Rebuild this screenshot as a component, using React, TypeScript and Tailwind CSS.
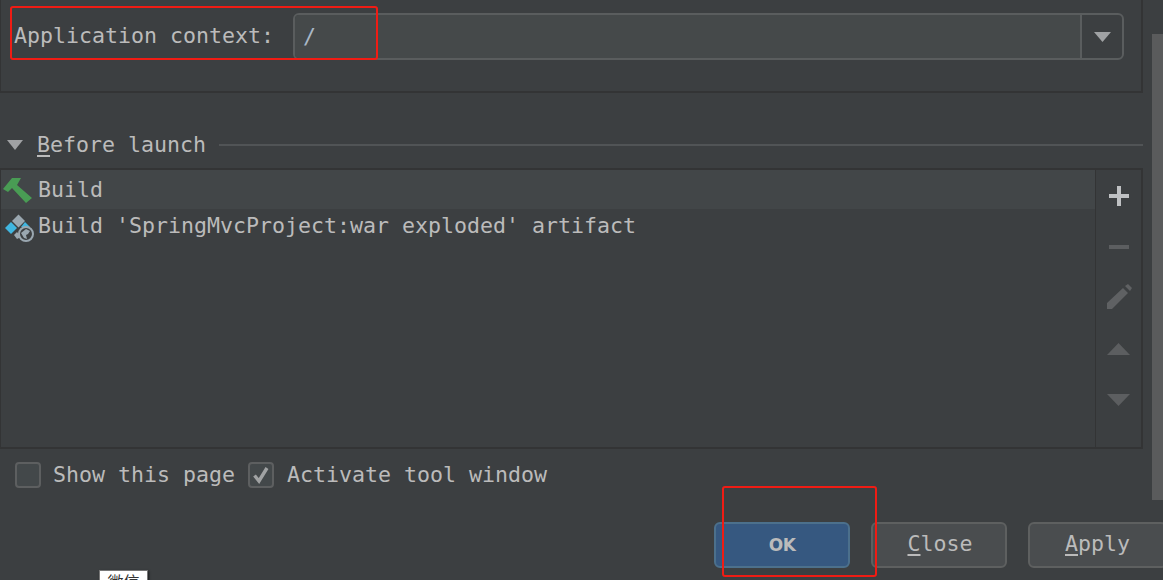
import React from "react";

const mono = "font-['DejaVu_Sans_Mono',monospace] text-[21.6px] leading-none";

function Tool({ children }: { children: React.ReactNode }) {
  return <div className="h-[51px] flex items-center justify-center">{children}</div>;
}

function Check({ checked }: { checked?: boolean }) {
  return (
    <div className="w-[26px] h-[26px] rounded-[4px] border-2 border-[#5d5f60] bg-[#43484a] flex items-center justify-center">
      {checked && (
        <svg width="20" height="20" viewBox="0 0 20 20">
          <path d="M3.5 10.5 L8 16 L16 3" fill="none" stroke="#a0a2a3" strokeWidth="3.4" />
        </svg>
      )}
    </div>
  );
}

function Btn({ children, cls }: { children: React.ReactNode; cls: string }) {
  return (
    <div className={`h-[46px] shrink-0 rounded-[6px] border-2 flex items-center justify-center ${cls}`}>
      {children}
    </div>
  );
}

export default function App() {
  return (
    <div className="relative w-[1163px] h-[580px] overflow-hidden bg-[#3c3f41] text-[#bbbbbb]">
      <div className="w-[1143px]">
        {/* top panel */}
        <div className="h-[93px] border-l border-r-2 border-b-2 border-[#333435] pt-[13px] pl-[13px] pr-[17px]">
          <div className="flex items-center h-[47px]">
            <span className={`${mono} w-[280px] shrink-0 pb-[2px] text-[#bbbbbb] whitespace-pre`}>Application context:</span>
            <div className="flex-1 -ml-[1px] h-[47px] flex rounded-[6px] border-2 border-[#5a5d5e] overflow-hidden">
              <div className={`${mono} flex-1 bg-[#45494a] flex items-center pl-[8px] text-[#a9b7c6]`}>/</div>
              <div className="w-[42px] border-l-2 border-[#5a5d5e] flex items-center justify-center">
                <svg width="17" height="10" viewBox="0 0 17 10"><path d="M0 0 H17 L8.5 10 Z" fill="#a0a2a4" /></svg>
              </div>
            </div>
          </div>
        </div>

        {/* before launch header */}
        <div className="h-[75px] pt-[29px] flex items-center">
          <svg className="ml-[7px] shrink-0" width="16" height="10" viewBox="0 0 16 10"><path d="M0 0 H16 L8 10 Z" fill="#a0a2a4" /></svg>
          <span className={`${mono} ml-[14px] whitespace-pre`}><span className="underline underline-offset-[3px]">B</span>efore launch</span>
          <div className="ml-[13px] flex-1 h-[2px] bg-[#515456]" />
        </div>

        {/* list */}
        <div className="h-[281px] border-l border-r-2 border-t-2 border-b-2 border-[#333435] flex">
          <div className="flex-1 min-w-0">
            <div className="h-[39px] bg-[#424648] flex items-center">
              <svg className="shrink-0" width="32" height="31" viewBox="1 174 32 31">
                <path d="M3 189 L12 178 L21 178 L17 185 L32 198 L26 203 L12 188 L8 192 Z" fill="#499c54" />
              </svg>
              <span className={`${mono} ml-[5px] whitespace-pre`}>Build</span>
            </div>
            <div className="h-[35px] flex items-center">
              <svg className="ml-[1px] shrink-0" width="32" height="33" viewBox="2 210 32 33">
                <path d="M18.5 214.5 L25 221 L18.5 227.5 L12 221 Z" fill="#9aa7b0" />
                <path d="M11 222 L17 228 L11 234 L5 228 Z" fill="#40b6e0" />
                <path d="M25 222 L30 227 L21 227 Z" fill="#40b6e0" />
                <path d="M17 232 L21 237 L17 239 L14 235 Z" fill="#9aa7b0" />
                <circle cx="26" cy="234" r="7" fill="#3c3f41" stroke="#9aa7b0" strokeWidth="2" />
                <path d="M21 233 L26 229 L30 231 L28 234 L26 235 L27 239 L24 238 Z" fill="#9aa7b0" />
              </svg>
              <span className={`${mono} ml-[4px] pb-[1px] whitespace-pre`}>Build 'SpringMvcProject:war exploded' artifact</span>
            </div>
          </div>
          <div className="w-[46px] shrink-0 border-l border-[#333435]">
            <Tool>
              <svg width="20" height="20" viewBox="0 0 20 20"><path d="M8 0 H12 V8 H20 V12 H12 V20 H8 V12 H0 V8 H8 Z" fill="#bfc1c3" /></svg>
            </Tool>
            <Tool>
              <svg width="20" height="4" viewBox="0 0 20 4"><rect width="20" height="4" fill="#5c5e60" /></svg>
            </Tool>
            <Tool>
              <svg className="-mt-[1px]" width="26" height="26" viewBox="0 0 26 26">
                <path d="M1 19 L17 4 L22 9 L6 25 L1 25 Z M19 2 L22 0 L26 4 L24 7 Z" fill="#5f6163" />
              </svg>
            </Tool>
            <Tool>
              <svg width="23" height="12" viewBox="0 0 23 12"><path d="M0 12 L11.5 0 L23 12 Z" fill="#5c5e60" /></svg>
            </Tool>
            <Tool>
              <svg width="23" height="12" viewBox="0 0 23 12"><path d="M0 0 H23 L11.5 12 Z" fill="#5c5e60" /></svg>
            </Tool>
          </div>
        </div>

        {/* options */}
        <div className="flex items-center h-[26px] mt-[13px] pl-[15px]">
          <Check />
          <span className={`${mono} ml-[12px] pb-[1px] whitespace-pre`}>Show this page</span>
          <div className="ml-[13px]"><Check checked /></div>
          <span className={`${mono} ml-[13px] pb-[1px] whitespace-pre`}>Activate tool window</span>
        </div>
      </div>

      {/* buttons */}
      <div className="flex gap-[21px] pl-[714px] mt-[34px]">
        <Btn cls="w-[136px] bg-[#365880] border-[#4c708c]">
          <span className="font-['DejaVu_Sans',sans-serif] text-[17px] leading-none font-bold text-[#bbbbbb] -tracking-[0.5px]">OK</span>
        </Btn>
        <Btn cls="w-[136px] pl-[2px] pb-[3px] bg-[#4a4d4f] border-[#5e6060]">
          <span className={`${mono} whitespace-pre`}><span className="underline underline-offset-[3px]">C</span>lose</span>
        </Btn>
        <Btn cls="w-[139px] pb-[3px] bg-[#4a4d4f] border-[#5e6060]">
          <span className={`${mono} whitespace-pre`}><span className="underline underline-offset-[3px]">A</span>pply</span>
        </Btn>
      </div>

      {/* scrollbar */}
      <div className="absolute left-[1152px] top-[34px] w-[11px] h-[466px] bg-[#5a5b5c]" />

      {/* tooltip cut off by the bottom edge */}
      <div className="absolute left-[99px] top-[570px] w-[49px] h-[30px] bg-white border border-[#777] shadow-[1px_1px_2px_rgba(0,0,0,0.5)] text-center font-['Noto_Sans_CJK_SC',sans-serif] text-[16px] leading-[20px] text-[#333]">
        微信
      </div>

      {/* red annotations */}
      <div className="absolute left-[10px] top-[6px] w-[368px] h-[54px] border-2 border-[#f01c14] rounded-[3px]" />
      <div className="absolute left-[722px] top-[486px] w-[155px] h-[91px] border-2 border-[#f01c14] rounded-[3px]" />
    </div>
  );
}
